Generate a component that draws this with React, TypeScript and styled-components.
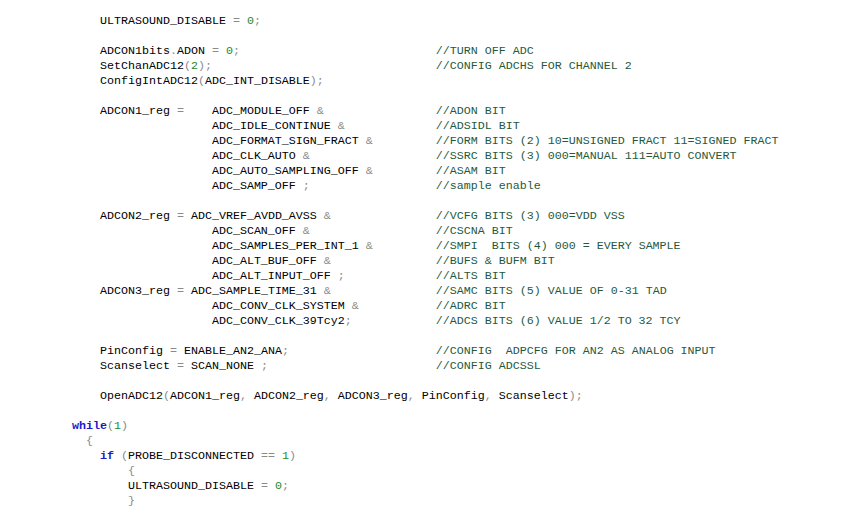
import React from "react";
import styled, { createGlobalStyle } from "styled-components";

const Global = createGlobalStyle`
  html, body { margin: 0; padding: 0; background: #ffffff; }
`;

const Page = styled.div`
  width: 844px;
  height: 526px;
  overflow: hidden;
  background: #ffffff;
  padding: 14px 0 0 72px;
  box-sizing: border-box;
`;

const Code = styled.pre`
  margin: 0;
  font-family: "Liberation Mono", "Courier New", monospace;
  font-size: 11.667px;
  line-height: 15px;
  color: #000000;
  white-space: pre;
`;

const Line = styled.div`
  height: 15px;
`;

const Tok = styled.span<{ $kind: "id" | "kw" | "num" | "op" | "cmt" | "ws" }>`
  color: ${(p) =>
    p.$kind === "kw"
      ? "#1a1ac8"
      : p.$kind === "num"
      ? "#1f8a1f"
      : p.$kind === "op"
      ? "#8a8a8a"
      : p.$kind === "cmt"
      ? "#1f5a3c"
      : "#000000"};
  font-weight: ${(p) => (p.$kind === "kw" ? 700 : 400)};
`;

const COL = 52;
const row = (code: string, comment?: string) =>
  comment ? code.padEnd(COL, " ") + comment : code;

const lines: string[] = [
  row("    ULTRASOUND_DISABLE = 0;"),
  "",
  row("    ADCON1bits.ADON = 0;", "//TURN OFF ADC"),
  row("    SetChanADC12(2);", "//CONFIG ADCHS FOR CHANNEL 2"),
  row("    ConfigIntADC12(ADC_INT_DISABLE);"),
  "",
  row("    ADCON1_reg =    ADC_MODULE_OFF &", "//ADON BIT"),
  row("                    ADC_IDLE_CONTINUE &", "//ADSIDL BIT"),
  row("                    ADC_FORMAT_SIGN_FRACT &", "//FORM BITS (2) 10=UNSIGNED FRACT 11=SIGNED FRACT"),
  row("                    ADC_CLK_AUTO &", "//SSRC BITS (3) 000=MANUAL 111=AUTO CONVERT"),
  row("                    ADC_AUTO_SAMPLING_OFF &", "//ASAM BIT"),
  row("                    ADC_SAMP_OFF ;", "//sample enable"),
  "",
  row("    ADCON2_reg = ADC_VREF_AVDD_AVSS &", "//VCFG BITS (3) 000=VDD VSS"),
  row("                    ADC_SCAN_OFF &", "//CSCNA BIT"),
  row("                    ADC_SAMPLES_PER_INT_1 &", "//SMPI  BITS (4) 000 = EVERY SAMPLE"),
  row("                    ADC_ALT_BUF_OFF &", "//BUFS & BUFM BIT"),
  row("                    ADC_ALT_INPUT_OFF ;", "//ALTS BIT"),
  row("    ADCON3_reg = ADC_SAMPLE_TIME_31 &", "//SAMC BITS (5) VALUE OF 0-31 TAD"),
  row("                    ADC_CONV_CLK_SYSTEM &", "//ADRC BIT"),
  row("                    ADC_CONV_CLK_39Tcy2;", "//ADCS BITS (6) VALUE 1/2 TO 32 TCY"),
  "",
  row("    PinConfig = ENABLE_AN2_ANA;", "//CONFIG  ADPCFG FOR AN2 AS ANALOG INPUT"),
  row("    Scanselect = SCAN_NONE ;", "//CONFIG ADCSSL"),
  "",
  row("    OpenADC12(ADCON1_reg, ADCON2_reg, ADCON3_reg, PinConfig, Scanselect);"),
  "",
  "while(1)",
  "  {",
  "    if (PROBE_DISCONNECTED == 1)",
  "        {",
  "        ULTRASOUND_DISABLE = 0;",
  "        }",
];

const KEYWORDS = new Set(["while", "if"]);

type Kind = "id" | "kw" | "num" | "op" | "cmt" | "ws";

function tokenize(src: string): { text: string; kind: Kind }[] {
  const out: { text: string; kind: Kind }[] = [];
  const re = /(\/\/.*$)|([A-Za-z_][A-Za-z0-9_]*)|(\d+)|(\s+)|(.)/g;
  let m: RegExpExecArray | null;
  while ((m = re.exec(src)) !== null) {
    if (m[1]) out.push({ text: m[1], kind: "cmt" });
    else if (m[2]) out.push({ text: m[2], kind: KEYWORDS.has(m[2]) ? "kw" : "id" });
    else if (m[3]) out.push({ text: m[3], kind: "num" });
    else if (m[4]) out.push({ text: m[4], kind: "ws" });
    else if (m[5]) out.push({ text: m[5], kind: "op" });
  }
  return out;
}

export default function App() {
  return (
    <>
      <Global />
      <Page>
        <Code>
          {lines.map((l, i) => (
            <Line key={i}>
              {tokenize(l).map((t, j) => (
                <Tok key={j} $kind={t.kind}>
                  {t.text}
                </Tok>
              ))}
            </Line>
          ))}
        </Code>
      </Page>
    </>
  );
}
